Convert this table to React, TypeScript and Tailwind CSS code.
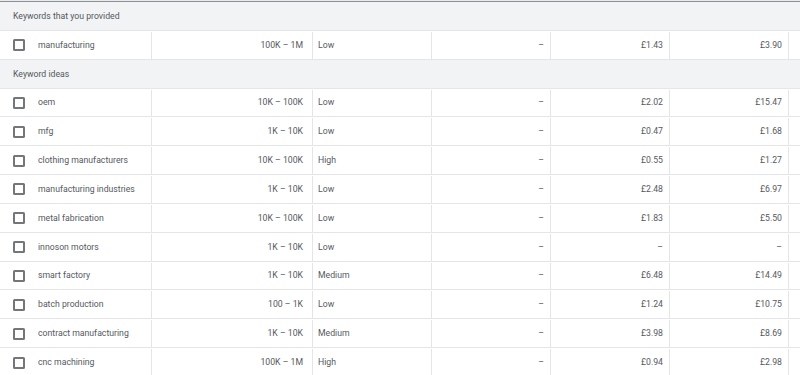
import React from "react";

type Row = { kw: string; range: string; comp: string; imp: string; low: string; high: string };

const provided: Row[] = [
  { kw: "manufacturing", range: "100K – 1M", comp: "Low", imp: "–", low: "£1.43", high: "£3.90" },
];

const ideas: Row[] = [
  { kw: "oem", range: "10K – 100K", comp: "Low", imp: "–", low: "£2.02", high: "£15.47" },
  { kw: "mfg", range: "1K – 10K", comp: "Low", imp: "–", low: "£0.47", high: "£1.68" },
  { kw: "clothing manufacturers", range: "10K – 100K", comp: "High", imp: "–", low: "£0.55", high: "£1.27" },
  { kw: "manufacturing industries", range: "1K – 10K", comp: "Low", imp: "–", low: "£2.48", high: "£6.97" },
  { kw: "metal fabrication", range: "10K – 100K", comp: "Low", imp: "–", low: "£1.83", high: "£5.50" },
  { kw: "innoson motors", range: "1K – 10K", comp: "Low", imp: "–", low: "–", high: "–" },
  { kw: "smart factory", range: "1K – 10K", comp: "Medium", imp: "–", low: "£6.48", high: "£14.49" },
  { kw: "batch production", range: "100 – 1K", comp: "Low", imp: "–", low: "£1.24", high: "£10.75" },
  { kw: "contract manufacturing", range: "1K – 10K", comp: "Medium", imp: "–", low: "£3.98", high: "£8.69" },
  { kw: "cnc machining", range: "100K – 1M", comp: "High", imp: "–", low: "£0.94", high: "£2.98" },
];

function GroupRow({ label }: { label: string }) {
  return (
    <div className="flex h-[28.85px] items-center border-b border-[#e3e5e8] bg-[#f1f3f4] pl-[13px] pt-[1px] text-[#55595e]">
      {label}
    </div>
  );
}

function DataRow({ r }: { r: Row }) {
  return (
    <div className="flex h-[28.85px] border-b border-[#e3e5e8] bg-white pt-[1px] text-[#55595e]">
      <div className="flex w-[152px] items-center border-r border-[#e3e5e8]">
        <span className="ml-[13px] box-border h-[12px] w-[12px] rounded-[1.5px] border-2 border-[#73777b]" />
        <span className="ml-[13px]">{r.kw}</span>
      </div>
      <div className="flex w-[161px] items-center justify-end border-r border-[#e3e5e8] pr-[9px]">{r.range}</div>
      <div className="flex w-[119px] items-center border-r border-[#e3e5e8] pl-[5px]">{r.comp}</div>
      <div className="flex w-[119px] items-center justify-end border-r border-[#e3e5e8] pr-[6px]">{r.imp}</div>
      <div className="flex w-[119px] items-center justify-end border-r border-[#e3e5e8] pr-[6px]">{r.low}</div>
      <div className="flex w-[119px] items-center justify-end border-r border-[#e3e5e8] pr-[6px]">{r.high}</div>
      <div className="flex-1" />
    </div>
  );
}

export default function App() {
  return (
    <div
      className="h-[375px] w-[800px] overflow-hidden bg-white text-[8.7px]"
      style={{ fontFamily: "Roboto, 'Liberation Sans', sans-serif" }}
    >
      <div className="h-[1px] bg-[#e8eaed]" />
      <div className="h-[1px] bg-[#8d9196]" />
      <GroupRow label="Keywords that you provided" />
      {provided.map((r) => (
        <DataRow key={r.kw} r={r} />
      ))}
      <GroupRow label="Keyword ideas" />
      {ideas.map((r) => (
        <DataRow key={r.kw} r={r} />
      ))}
    </div>
  );
}
